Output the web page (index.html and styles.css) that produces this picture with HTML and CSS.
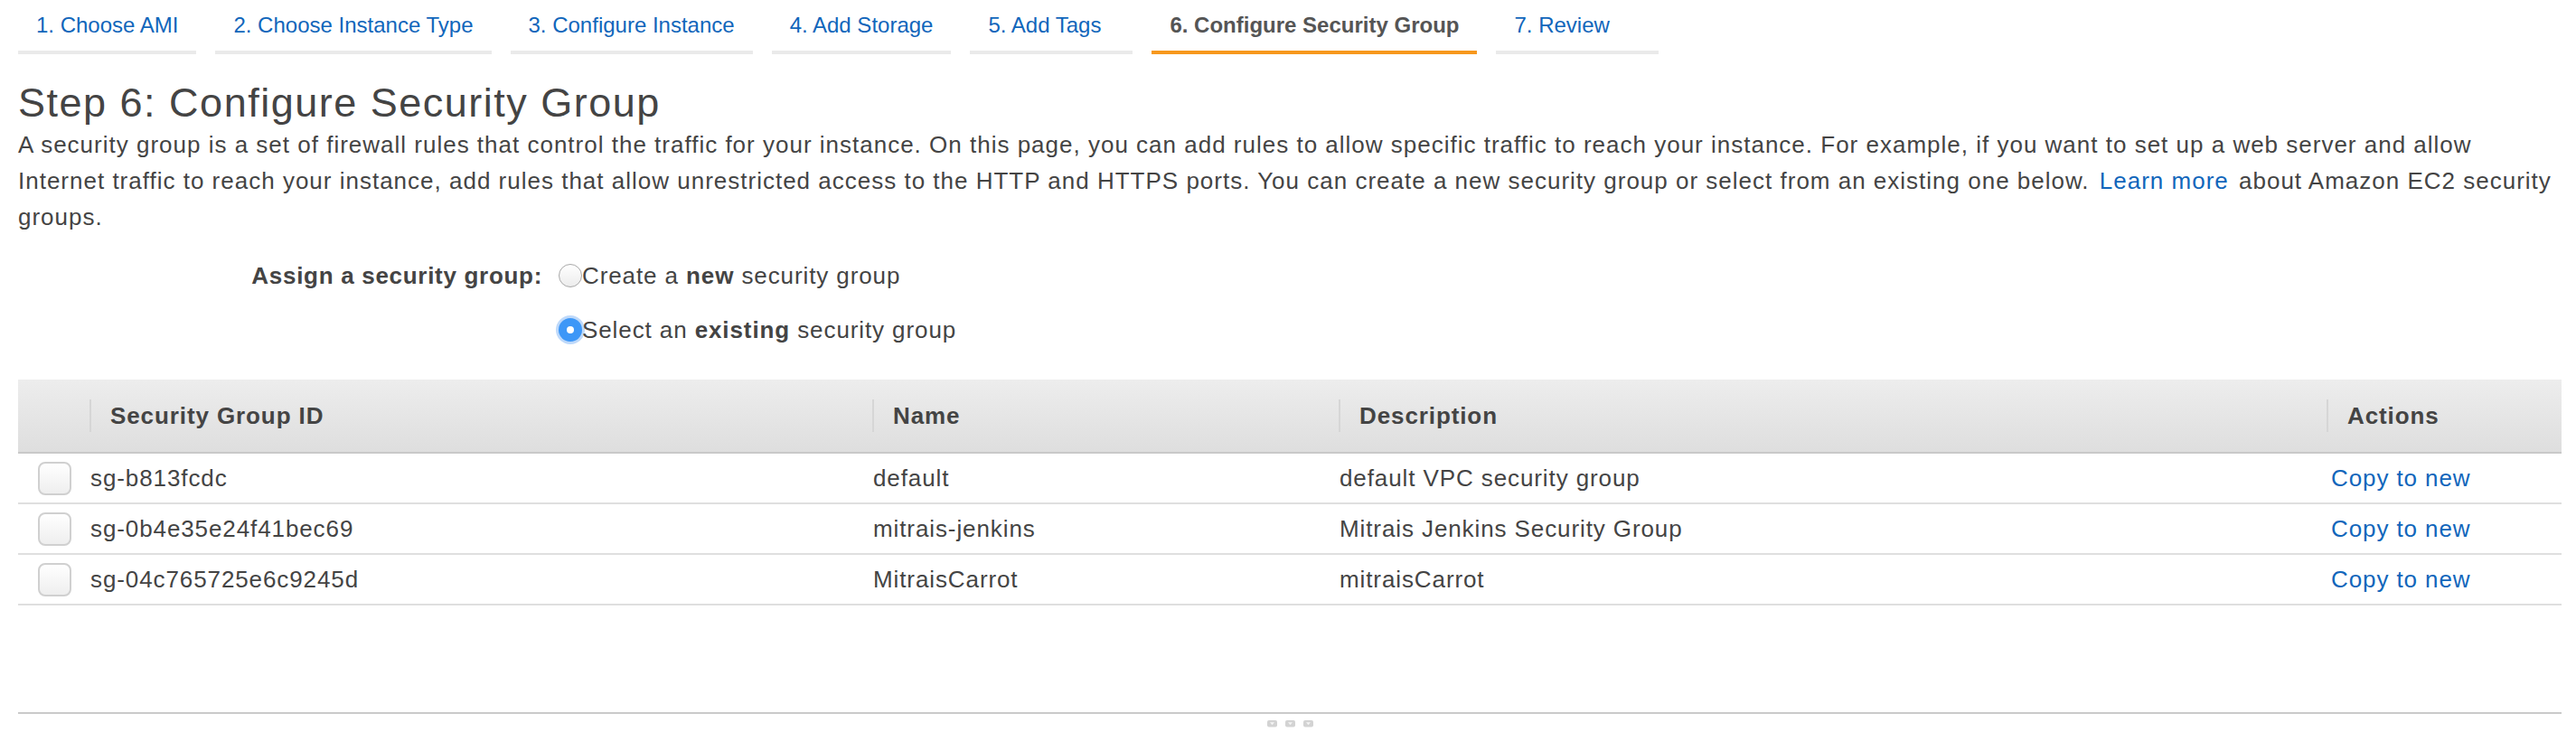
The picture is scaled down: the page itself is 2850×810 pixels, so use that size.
FILE: index.html
```html
<!DOCTYPE html>
<html lang="en">
<head>
<meta charset="utf-8">
<title>Step 6: Configure Security Group</title>
<link rel="stylesheet" href="styles.css">
</head>
<body>
<nav class="wizard-tabs">
  <a class="tab" href="#">1. Choose AMI</a>
  <a class="tab" href="#">2. Choose Instance Type</a>
  <a class="tab" href="#">3. Configure Instance</a>
  <a class="tab" href="#">4. Add Storage</a>
  <a class="tab" href="#">5. Add Tags</a>
  <span class="tab tab-active">6. Configure Security Group</span>
  <a class="tab" href="#">7. Review</a>
</nav>

<main class="content">
  <h1 class="page-title">Step 6: Configure Security Group</h1>
  <p class="intro">
    <span class="intro-line">A security group is a set of firewall rules that control the traffic for your instance. On this page, you can add rules to allow specific traffic to reach your instance. For example, if you want to set up a web server and allow</span>
    <span class="intro-line">Internet traffic to reach your instance, add rules that allow unrestricted access to the HTTP and HTTPS ports. You can create a new security group or select from an existing one below. <a class="link learn-more" href="#">Learn more</a> about Amazon EC2 security</span>
    <span class="intro-line">groups.</span>
  </p>

  <div class="assign">
    <div class="assign-label">Assign a security group:</div>
    <label class="radio-option"><span class="radio"></span><span class="radio-text">Create a <b>new</b> security group</span></label>
    <label class="radio-option radio-option-second"><span class="radio radio-checked"></span><span class="radio-text">Select an <b>existing</b> security group</span></label>
  </div>

  <table class="sg-table">
    <colgroup>
      <col class="col-check">
      <col class="col-id">
      <col class="col-name">
      <col class="col-desc">
      <col class="col-actions">
    </colgroup>
    <thead>
      <tr>
        <th></th>
        <th><div class="th-inner"><span class="th-sep"></span>Security Group ID</div></th>
        <th><div class="th-inner"><span class="th-sep"></span>Name</div></th>
        <th><div class="th-inner"><span class="th-sep"></span>Description</div></th>
        <th><div class="th-inner"><span class="th-sep"></span>Actions</div></th>
      </tr>
    </thead>
    <tbody>
      <tr>
        <td class="cell-check"><span class="checkbox"></span></td>
        <td>sg-b813fcdc</td>
        <td>default</td>
        <td>default VPC security group</td>
        <td class="cell-action"><a class="link" href="#">Copy to new</a></td>
      </tr>
      <tr>
        <td class="cell-check"><span class="checkbox"></span></td>
        <td>sg-0b4e35e24f41bec69</td>
        <td>mitrais-jenkins</td>
        <td>Mitrais Jenkins Security Group</td>
        <td class="cell-action"><a class="link" href="#">Copy to new</a></td>
      </tr>
      <tr>
        <td class="cell-check"><span class="checkbox"></span></td>
        <td>sg-04c765725e6c9245d</td>
        <td>MitraisCarrot</td>
        <td>mitraisCarrot</td>
        <td class="cell-action"><a class="link" href="#">Copy to new</a></td>
      </tr>
    </tbody>
  </table>

  <div class="pane-divider">
    <svg class="grip" width="11" height="8" viewBox="0 0 11 8"><rect x="0" y="0" width="11" height="7.5" rx="2" fill="#d3d3d3"/><path d="M3 2.2 L5.5 5.2 L8 2.2 Z" fill="#f4f4f4"/></svg>
    <svg class="grip" width="11" height="8" viewBox="0 0 11 8"><rect x="0" y="0" width="11" height="7.5" rx="2" fill="#d3d3d3"/><path d="M3 2.2 L5.5 5.2 L8 2.2 Z" fill="#f4f4f4"/></svg>
    <svg class="grip" width="11" height="8" viewBox="0 0 11 8"><rect x="0" y="0" width="11" height="7.5" rx="2" fill="#d3d3d3"/><path d="M3 2.2 L5.5 5.2 L8 2.2 Z" fill="#f4f4f4"/></svg>
  </div>
</main>
</body>
</html>
```

FILE: styles.css
```css
html, body {
  margin: 0;
  background: #ffffff;
}

body {
  padding: 0 16px 0 20px;
  font-family: "Liberation Sans", Arial, sans-serif;
  color: #444444;
  overflow: hidden;
}

/* ---------- wizard tabs ---------- */
.wizard-tabs {
  display: flex;
  gap: 21px;
}

.tab {
  box-sizing: border-box;
  min-width: 180px;
  padding: 14px 20px;
  font-size: 24px;
  line-height: 28px;
  color: #1166bb;
  text-decoration: none;
  white-space: nowrap;
  border-bottom: 4px solid #eaeaea;
}

.tab-active {
  color: #555555;
  font-weight: bold;
  border-bottom-color: #f7981d;
}

/* ---------- heading & intro ---------- */
.page-title {
  margin: 28px 0 0;
  font-size: 45px;
  line-height: 52px;
  font-weight: normal;
  letter-spacing: 1.5px;
  color: #444444;
}

.intro {
  margin: 0;
  font-size: 26px;
  line-height: 40px;
  letter-spacing: 1px;
  color: #444444;
}

.intro-line {
  display: block;
  white-space: nowrap;
}

.link {
  color: #1166bb;
  text-decoration: none;
}

.learn-more {
  margin: 0 3px;
}

/* ---------- assign radios ---------- */
.assign {
  margin-top: 25px;
  display: grid;
  grid-template-columns: 580px auto;
  column-gap: 18px;
  row-gap: 20px;
  justify-content: start;
  font-size: 26px;
  line-height: 40px;
  letter-spacing: 0.9px;
}

.assign-label {
  text-align: right;
  font-weight: bold;
  letter-spacing: 0.7px;
  color: #444444;
}

.radio-option {
  display: flex;
  align-items: center;
  height: 40px;
  white-space: nowrap;
}

.radio-option-second {
  grid-column: 2;
}

.radio {
  box-sizing: border-box;
  flex: none;
  width: 26px;
  height: 26px;
  border-radius: 50%;
  border: 1px solid #a8a8a8;
  background: linear-gradient(#ffffff, #ececec);
}

.radio-checked {
  border: none;
  background: #3d97f7;
  box-shadow: 0 0 0 3px rgba(110, 170, 245, 0.45);
  display: flex;
  align-items: center;
  justify-content: center;
}

.radio-checked::after {
  content: "";
  width: 8px;
  height: 8px;
  border-radius: 50%;
  background: #ffffff;
}

/* ---------- table ---------- */
.sg-table {
  margin-top: 35px;
  width: 100%;
  table-layout: fixed;
  border-collapse: collapse;
  font-size: 26px;
  letter-spacing: 0.9px;
  color: #444444;
}

.col-check { width: 79px; }
.col-id { width: 866px; }
.col-name { width: 516px; }
.col-desc { width: 1093px; }
.col-actions { width: auto; }

.sg-table th {
  height: 80px;
  padding: 0;
  text-align: left;
  font-weight: bold;
  background: linear-gradient(#ededed, #dedede);
  border-bottom: 2px solid #c9c9c9;
}

.th-inner {
  display: flex;
  align-items: center;
  white-space: nowrap;
}

.th-sep {
  flex: none;
  width: 2px;
  height: 36px;
  margin-right: 21px;
  background: #d6d6d6;
}

.sg-table td {
  height: 54px;
  padding: 0 0 0 1px;
  vertical-align: middle;
  white-space: nowrap;
  border-bottom: 2px solid #dfdfdf;
}

.sg-table td.cell-check {
  padding-left: 22px;
}

.sg-table td.cell-action {
  padding-left: 5px;
}

.checkbox {
  display: block;
  box-sizing: border-box;
  width: 37px;
  height: 37px;
  border-radius: 8px;
  border: 2px solid #d0d0d0;
  background: linear-gradient(#ffffff, #eeeeee);
}

/* ---------- pane divider ---------- */
.pane-divider {
  margin-top: 118px;
  border-top: 2px solid #cacaca;
  padding-top: 7px;
  display: flex;
  justify-content: center;
  gap: 9px;
}

.grip {
  display: block;
}
```
